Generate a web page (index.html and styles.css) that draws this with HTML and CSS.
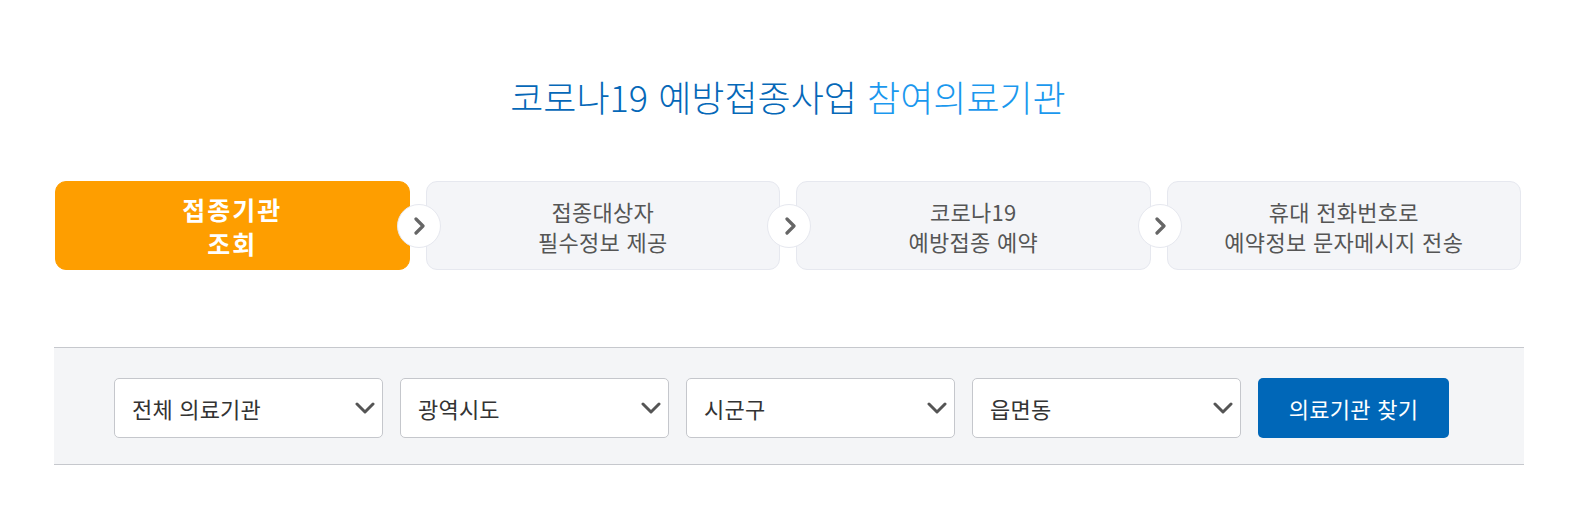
FILE: index.html
```html
<!DOCTYPE html>
<html lang="ko">
<head>
<meta charset="utf-8">
<title>코로나19 예방접종사업 참여의료기관</title>
<link rel="stylesheet" href="styles.css">
</head>
<body>
<div class="wrap">
  <h1 class="title">코로나19 예방접종사업 <span class="hl">참여의료기관</span></h1>

  <ol class="steps">
    <li class="step active">접종기관<br>조회</li>
    <li class="step">
      <span class="arrow"><svg width="12" height="18" viewBox="0 0 12 18"><polyline points="2,2 9,9 2,16" fill="none" stroke="#666" stroke-width="3.2" stroke-linecap="round" stroke-linejoin="round"/></svg></span>
      접종대상자<br>필수정보 제공
    </li>
    <li class="step">
      <span class="arrow"><svg width="12" height="18" viewBox="0 0 12 18"><polyline points="2,2 9,9 2,16" fill="none" stroke="#666" stroke-width="3.2" stroke-linecap="round" stroke-linejoin="round"/></svg></span>
      코로나19<br>예방접종 예약
    </li>
    <li class="step">
      <span class="arrow"><svg width="12" height="18" viewBox="0 0 12 18"><polyline points="2,2 9,9 2,16" fill="none" stroke="#666" stroke-width="3.2" stroke-linecap="round" stroke-linejoin="round"/></svg></span>
      휴대 전화번호로<br>예약정보 문자메시지 전송
    </li>
  </ol>

  <div class="filter">
    <div class="select"><span>전체 의료기관</span><svg class="caret" width="20" height="12" viewBox="0 0 20 12"><polyline points="2,2 10,10 18,2" fill="none" stroke="#555" stroke-width="3" stroke-linecap="round" stroke-linejoin="round"/></svg></div>
    <div class="select"><span>광역시도</span><svg class="caret" width="20" height="12" viewBox="0 0 20 12"><polyline points="2,2 10,10 18,2" fill="none" stroke="#555" stroke-width="3" stroke-linecap="round" stroke-linejoin="round"/></svg></div>
    <div class="select"><span>시군구</span><svg class="caret" width="20" height="12" viewBox="0 0 20 12"><polyline points="2,2 10,10 18,2" fill="none" stroke="#555" stroke-width="3" stroke-linecap="round" stroke-linejoin="round"/></svg></div>
    <div class="select"><span>읍면동</span><svg class="caret" width="20" height="12" viewBox="0 0 20 12"><polyline points="2,2 10,10 18,2" fill="none" stroke="#555" stroke-width="3" stroke-linecap="round" stroke-linejoin="round"/></svg></div>
    <button class="btn" type="button">의료기관 찾기</button>
  </div>
</div>
</body>
</html>
```

FILE: styles.css
```css
html, body {
  margin: 0;
  padding: 0;
  background: #ffffff;
}
body {
  font-family: "Noto Sans CJK KR", "Noto Sans", sans-serif;
  color: #333;
}
.wrap {
  margin-left: 54px;
  width: 1470px;
  padding-top: 72px;
}
.title {
  margin: 0 3px 0 1px;
  text-align: center;
  font-size: 36px;
  line-height: 48px;
  font-weight: 300;
  color: #0568b8;
  letter-spacing: 0;
}
.title .hl {
  color: #1a98ee;
}
.steps {
  list-style: none;
  margin: 61px 3px 0 1px;
  padding: 0;
  display: grid;
  grid-template-columns: repeat(4, 1fr);
  gap: 16px;
}
.step {
  position: relative;
  height: 89px;
  box-sizing: border-box;
  display: flex;
  align-items: center;
  justify-content: center;
  text-align: center;
  background: #f4f5f8;
  border: 1px solid #e6e8ef;
  border-radius: 11px;
  font-size: 22px;
  line-height: 30px;
  color: #555;
  letter-spacing: 0.3px;
}
.step.active {
  background: #fe9e00;
  border-color: #fe9e00;
  color: #fff;
  font-weight: 700;
  font-size: 25px;
  line-height: 34px;
  letter-spacing: 2px;
}
.arrow {
  position: absolute;
  left: -30px;
  top: 50%;
  margin-top: -22px;
  width: 44px;
  height: 44px;
  box-sizing: border-box;
  border-radius: 50%;
  background: #fff;
  border: 1px solid #e6e8ef;
  display: flex;
  align-items: center;
  justify-content: center;
  padding-left: 3px;
}
.arrow svg { display: block; }
.filter {
  margin-top: 77px;
  background: #f4f5f7;
  border-top: 1px solid #c6c8cd;
  border-bottom: 1px solid #c6c8cd;
  padding: 30px 0 26px 60px;
  display: flex;
  gap: 17px;
}
.select {
  width: 269px;
  height: 60px;
  box-sizing: border-box;
  background: #fff;
  border: 1px solid #c5c7cc;
  border-radius: 5px;
  display: flex;
  align-items: center;
  justify-content: space-between;
  padding: 0 7px 0 17px;
  font-size: 22px;
  color: #333;
  letter-spacing: 0.2px;
}
.caret { display: block; }
.btn {
  width: 191px;
  height: 60px;
  border: 0;
  border-radius: 5px;
  background: #0067b8;
  color: #fff;
  font-family: "Noto Sans CJK KR", "Noto Sans", sans-serif;
  font-size: 22px;
  letter-spacing: 0.3px;
  padding: 0;
  cursor: pointer;
}
```
